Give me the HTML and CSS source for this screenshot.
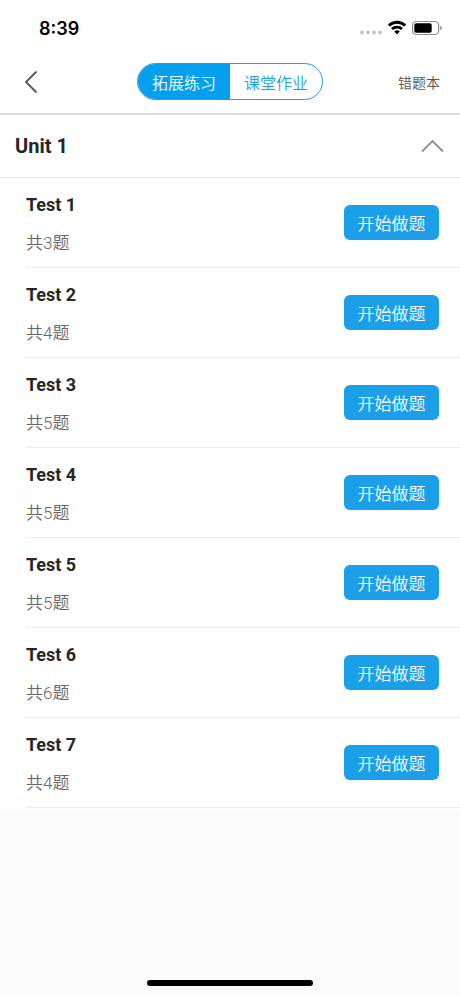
FILE: index.html
```html
<!DOCTYPE html>
<html lang="zh-CN">
<head>
  <meta charset="UTF-8">
  <meta name="viewport" content="width=device-width, initial-scale=1.0">
  <title>拓展练习</title>
  <link rel="stylesheet" href="styles.css">
</head>
<body>
  <div class="status-bar">
    <span class="time">8:39</span>
    <div class="status-icons">
      <svg width="22" height="18" viewBox="0 0 22 18" fill="#c4c4c4">
        <circle cx="2" cy="13.5" r="2"/>
        <circle cx="8" cy="13.5" r="2"/>
        <circle cx="14" cy="13.5" r="2"/>
        <circle cx="20" cy="13.5" r="2"/>
      </svg>
      <svg width="18" height="18" viewBox="0 0 18 18" fill="none" stroke="#000" stroke-width="2.8">
        <path d="M0.9 6.6a11.5 11.5 0 0 1 16.2 0"/>
        <path d="M4 10.1a7.1 7.1 0 0 1 10 0"/>
        <path d="M9 15.5l-2.8-3a4.1 4.1 0 0 1 5.6 0z" fill="#000" stroke="none"/>
      </svg>
      <svg width="30" height="18" viewBox="0 0 30 18">
        <rect x="0.6" y="2.5" width="26" height="13" rx="3.6" fill="none" stroke="#8d8d8d" stroke-width="1.2"/>
        <rect x="2.3" y="4.3" width="17.4" height="9.4" rx="1.8"/>
        <path d="M28.2 6.7v4.6c1.2-0.5 1.6-1.3 1.6-2.3s-0.4-1.8-1.6-2.3z" fill="#8d8d8d"/>
      </svg>
    </div>
  </div>

  <header class="nav">
    <button class="back" type="button" aria-label="返回">
      <svg width="14" height="24" viewBox="0 0 14 24" fill="none" stroke="#555" stroke-width="1.8">
        <path d="M12.5 1.5L2 12l10.5 10.5"/>
      </svg>
    </button>
    <div class="tabs">
      <button class="tab active" type="button">拓展练习</button>
      <button class="tab" type="button">课堂作业</button>
    </div>
    <a class="wrong-book" href="#">错题本</a>
  </header>

  <main class="unit">
    <button class="unit-header" type="button" aria-expanded="true">
      <span>Unit 1</span>
      <svg width="23" height="14" viewBox="0 0 23 14" fill="none" stroke="#8f8f8f" stroke-width="1.8">
        <path d="M1 12.5L11.5 2L22 12.5"/>
      </svg>
    </button>
    <ul class="test-list">
      <li class="test">
        <div class="info">
          <h2>Test 1</h2>
          <p>共3题</p>
        </div>
        <button class="start" type="button">开始做题</button>
      </li>
      <li class="test">
        <div class="info">
          <h2>Test 2</h2>
          <p>共4题</p>
        </div>
        <button class="start" type="button">开始做题</button>
      </li>
      <li class="test">
        <div class="info">
          <h2>Test 3</h2>
          <p>共5题</p>
        </div>
        <button class="start" type="button">开始做题</button>
      </li>
      <li class="test">
        <div class="info">
          <h2>Test 4</h2>
          <p>共5题</p>
        </div>
        <button class="start" type="button">开始做题</button>
      </li>
      <li class="test">
        <div class="info">
          <h2>Test 5</h2>
          <p>共5题</p>
        </div>
        <button class="start" type="button">开始做题</button>
      </li>
      <li class="test">
        <div class="info">
          <h2>Test 6</h2>
          <p>共6题</p>
        </div>
        <button class="start" type="button">开始做题</button>
      </li>
      <li class="test">
        <div class="info">
          <h2>Test 7</h2>
          <p>共4题</p>
        </div>
        <button class="start" type="button">开始做题</button>
      </li>
    </ul>
  </main>

  <div class="home-indicator"></div>
</body>
</html>
```
FILE: styles.css
```css
*{
  box-sizing: border-box;
}

body{
  margin: 0;
  min-height: 100vh;
  display: flex;
  flex-direction: column;
  background-color: #fafafa;
  color: #262626;
  font-family: Roboto, 'Noto Sans CJK SC', sans-serif;
}

button{
  margin: 0;
  padding: 0;
  border: none;
  background: none;
  color: inherit;
  font-family: inherit;
}

svg{
  display: block;
}

.status-bar{
  display: flex;
  align-items: center;
  justify-content: space-between;
  height: 50px;
  padding: 6px 18px 0 39px;
  background-color: #fff;
}

.time{
  color: #000;
  font-family: Inter, sans-serif;
  font-size: 18px;
  font-weight: 600;
}

.status-icons{
  display: flex;
  gap: 6px;
}

.nav{
  display: grid;
  grid-template-columns: 1fr auto 1fr;
  align-items: center;
  height: 65px;
  padding: 0 20px;
  background-color: #fff;
  border-bottom: 2px solid #dcdcdc;
}

.back{
  justify-self: start;
  padding: 0 4px;
}

.tabs{
  display: flex;
  height: 37px;
  overflow: hidden;
  border: 1px solid #1b9fe6;
  border-radius: 19px;
}

.tab{
  width: 92px;
  color: #1b9fe6;
  font-size: 16px;
  font-weight: 350;
}

.tab.active{
  background-color: #049fee;
  color: #fff;
}

.wrong-book{
  justify-self: end;
  color: #555;
  font-size: 14px;
  font-weight: 350;
  text-decoration: none;
}

.unit{
  background-color: #fff;
}

.unit-header{
  display: flex;
  align-items: center;
  justify-content: space-between;
  width: 100%;
  height: 63px;
  padding: 0 16px 0 15px;
  border-bottom: 1px solid #e6e6e6;
  font-size: 20px;
  font-weight: 700;
}

.test-list{
  margin: 0;
  padding: 0 0 2px 26px;
  list-style: none;
}

.test{
  display: flex;
  align-items: center;
  justify-content: space-between;
  height: 90px;
  padding-right: 21px;
  border-bottom: 1px solid #ececec;
}

.info{
  display: flex;
  flex-direction: column;
  gap: 14px;
  padding-top: 3px;
}

.info h2{
  margin: 0;
  font-size: 18px;
  line-height: 24px;
  font-weight: 700;
}

.info p{
  margin: 0;
  color: #666;
  font-size: 17px;
  font-weight: 350;
  line-height: 24px;
}

.start{
  width: 95px;
  height: 35px;
  border-radius: 6px;
  background-color: #1b9fe9;
  color: #fff;
  font-size: 17px;
  font-weight: 350;
}

.home-indicator{
  width: 36%;
  height: 6px;
  margin: auto auto 10px;
  border-radius: 3px;
  background-color: #000;
}
```
